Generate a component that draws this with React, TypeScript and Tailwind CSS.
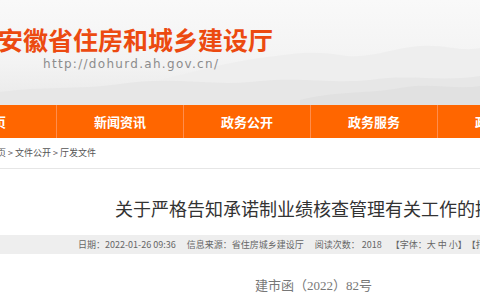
import React from "react";

const cjk = { fontFamily: '"Noto Sans CJK SC", "Noto Sans", sans-serif' };

const navItems = ["首页", "新闻资讯", "政务公开", "政务服务", "政务互动"];

function Mountains() {
  return (
    <svg
      className="absolute left-0 top-0 h-[105px] w-[480px]"
      viewBox="0 0 480 105"
      preserveAspectRatio="none"
    >
      <defs>
        <linearGradient id="sky" x1="0" y1="0" x2="0" y2="1">
          <stop offset="0" stopColor="#f9f9f9" />
          <stop offset="0.6" stopColor="#f3f3f3" />
          <stop offset="1" stopColor="#e9e9e9" />
        </linearGradient>
      </defs>
      <rect width="480" height="105" fill="url(#sky)" />
      <path
        d="M160 80 C200 70 230 62 260 58 C290 54 310 50 340 55 C370 60 390 48 420 46 C445 44 460 52 480 48 L480 105 L160 105 Z"
        fill="#eeeeee"
      />
      <path
        d="M0 92 C40 86 80 90 120 84 C170 76 210 86 250 82 C300 76 330 84 370 80 C410 74 440 82 480 76 L480 105 L0 105 Z"
        fill="#e7e7e7"
      />
      <path
        d="M300 100 C340 90 370 94 400 88 C430 82 455 90 480 86 L480 105 L300 105 Z"
        fill="#e1e1e1"
      />
    </svg>
  );
}

export default function App() {
  return (
    <div className="relative h-[300px] w-[480px] overflow-hidden bg-white" style={cjk}>
      {/* header */}
      <header className="relative h-[105px] w-full">
        <Mountains />
        <div className="relative pl-0 pt-[26px]">
          <h1
            className="-ml-[2px] whitespace-nowrap text-[25px] font-bold leading-[27px] text-[#ec4a10]"
            style={cjk}
          >
            安徽省住房和城乡建设厅
          </h1>
          <p
            className="ml-[43px] mt-[4px] whitespace-nowrap text-[12px] leading-[14px] tracking-[1.3px] text-[#8c8c8c]"
            style={{ fontFamily: '"DejaVu Sans", sans-serif' }}
          >
            http://dohurd.ah.gov.cn/
          </p>
        </div>
      </header>

      {/* nav */}
      <nav className="flex h-[33px] bg-[#ff6600]">
        <div className="-ml-[70px] flex">
          {navItems.map((item) => (
            <div
              key={item}
              className="flex w-[127px] shrink-0 items-center justify-center border-r border-[#ff8d4d] text-[13px] font-bold text-white"
            >
              {item}
            </div>
          ))}
        </div>
      </nav>

      {/* breadcrumb */}
      <div className="flex h-[31px] items-center border-b border-[#e6e6e6] whitespace-nowrap text-[9px] text-[#555]">
        <span className="-ml-[12px]">首页 &gt; 文件公开 &gt; 厅发文件</span>
      </div>

      {/* title */}
      <h2 className="mt-[30px] whitespace-nowrap pl-[115px] text-[18px] leading-[18px] text-[#333]">
        关于严格告知承诺制业绩核查管理有关工作的提醒
      </h2>

      {/* info bar */}
      <div className="mt-[18px] flex h-[19px] items-center whitespace-nowrap bg-[#eeeeee] pl-[78px] text-[9px] text-[#666]">
        <span>日期：2022-01-26 09:36</span>
        <span className="ml-[11px]">信息来源：省住房城乡建设厅</span>
        <span className="ml-[11px]">阅读次数： 2018</span>
        <span className="ml-[9px]">【字体：大 中 小】</span>
        <span>【打印】</span>
      </div>

      {/* body */}
      <p
        className="mt-[25px] whitespace-nowrap pl-[255px] text-[13px] leading-[13px] text-[#777]"
        style={{ fontFamily: '"Liberation Serif", "Noto Sans CJK SC", serif' }}
      >
        建市函（2022）82号
      </p>
    </div>
  );
}
